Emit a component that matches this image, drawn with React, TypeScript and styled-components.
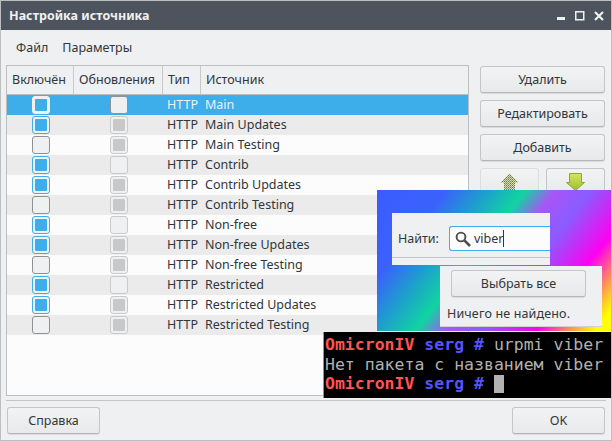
import React from "react";
import styled, { createGlobalStyle } from "styled-components";

const Global = createGlobalStyle`
  html, body { margin: 0; padding: 0; background: #eff0f1; }
  body { font-family: "Noto Sans", "Open Sans", sans-serif; font-size: 12.5px; color: #31363b; }
`;

const Win = styled.div`
  position: relative; width: 612px; height: 441px; box-sizing: border-box; overflow: hidden;
  border: 1px solid #bcbebf; display: flex; flex-direction: column; background: #eff0f1;
`;
const TitleBar = styled.div`
  height: 29px; background: #4d545e; color: #eff0f1; font-weight: 700; font-size: 12.5px; display: flex; align-items: center;
  justify-content: space-between; padding: 0 8px; flex: none;
`;
const WinBtns = styled.div`display: flex; gap: 9px; align-items: center; margin-right: -1px;`;
const MenuBar = styled.div`height: 35px; display: flex; align-items: center; gap: 14px; padding: 0 0 1px 15px; box-sizing: border-box; flex: none;`;
const Main = styled.div`display: flex; padding-left: 5px; gap: 11px; flex: none; height: 331px;`;
const Table = styled.div`
  width: 463px; height: 331px; box-sizing: border-box; border: 1px solid #bcbebf; background: #fcfcfc; display: flex; flex-direction: column;
`;
const HeadRow = styled.div`display: flex; height: 28px; background: #eff0f1; border-bottom: 1px solid #bcbebf; flex: none;`;
const HeadCell = styled.div<{ $w?: number }>`
  ${p => (p.$w ? `width:${p.$w}px;` : "flex:1;")} box-sizing: border-box; padding: 0 0 1px 5px; display: flex; align-items: center;
  border-right: ${p => (p.$w ? "1px solid #c6c8c9" : "none")};
`;
const Row = styled.div<{ $sel?: boolean; $alt?: boolean }>`
  display: flex; height: 20px; align-items: center; flex: none;
  background: ${p => (p.$sel ? "#3daee9" : p.$alt ? "#ebebeb" : "#fcfcfc")};
  color: ${p => (p.$sel ? "#eff0f1" : "#31363b")};
`;
const CheckCell = styled.div<{ $w: number }>`width: ${p => p.$w}px; display: flex; justify-content: center; align-items: center; flex: none;`;
const TextCell = styled.div<{ $w?: number }>`${p => (p.$w ? `width:${p.$w}px;flex:none;` : "flex:1;")} padding: 0 0 2px 4px; box-sizing: border-box;`;
const Check = styled.div<{ $on?: boolean; $onSel?: boolean; $off?: boolean; $fill?: boolean }>`
  width: 18px; height: 18px; box-sizing: border-box; border-radius: 3px; background: #eff0f1; padding: 2px;
  border: 1px solid ${p => (p.$onSel ? "#eff0f1" : p.$on ? "#3daee9" : p.$off ? "#c9cacb" : "#8f9192")};
  &::after { content: ""; display: block; width: 100%; height: 100%; border-radius: 1px;
    background: ${p => (p.$on ? "#3daee9" : p.$fill ? "#c8c8c8" : "transparent")}; }
`;
const Side = styled.div`width: 125px; display: flex; flex-direction: column; gap: 7px; padding-top: 1px;`;
const Btn = styled.div<{ $w?: number; $dim?: boolean }>`
  ${p => (p.$w ? `width:${p.$w}px;` : "")} height: 27px; box-sizing: border-box; display: flex; align-items: center; justify-content: center;
  border: 1px solid ${p => (p.$dim ? "#dcdddd" : "#c3c5c6")}; border-bottom-color: ${p => (p.$dim ? "#dcdddd" : "#b5b7b8")}; border-radius: 3px;
  background: linear-gradient(#f2f3f3, #e8e9ea); flex: none;
  box-shadow: ${p => (p.$dim ? "none" : "0 1px 0 #dadbdc")};
`;
const ArrowRow = styled.div`display: flex; gap: 7px;`;
const Sep = styled.div`height: 1px; background: #c3c5c6; margin: 4px 5px 0 5px; flex: none;`;
const Footer = styled.div`display: flex; justify-content: space-between; padding: 6px 6px 0 6px; flex: none;`;

const Collage = styled.div`
  position: absolute; left: 376px; top: 189px; width: 235px; height: 141px;
  background: linear-gradient(128deg, #3a5cff 0%, #3a62fb 20%, #1f9bd0 31%, #10d4a0 43%, #a855f7 52%, #8a5cff 62%, #ff00f0 78%, #ff9a50 88%, #ffff00 95%);
`;
const FindPanel = styled.div`
  position: absolute; left: 15px; top: 23px; width: 158px; height: 52px; background: #eff0f1; display: flex; flex-direction: column;
`;
const FindRow = styled.div`display: flex; align-items: center; gap: 10px; padding: 13px 0 0 6px; height: 25px; flex: none;`;
const FindInput = styled.div`
  flex: 1; height: 25px; box-sizing: border-box; background: #fcfcfc; border: 1px solid #3daee9; border-right: none; border-radius: 3px 0 0 3px;
  display: flex; align-items: center; padding-left: 5px; gap: 4px;
`;
const Caret = styled.span`border-right: 1px solid #31363b; margin-left: -1px;`;
const FindSep = styled.div`height: 1px; background: #c3c5c6; margin-top: 6px;`;
const SelectPanel = styled.div`
  position: absolute; left: 63px; top: 76px; width: 162px; height: 61px; background: #eff0f1; box-sizing: border-box; padding: 4px 0 0 11px;
  border-bottom: 1px solid #d0d1d2;
`;
const Found = styled.div`margin: 8px 0 0 -4px; letter-spacing: .15px;`;
const Term = styled.div`
  position: absolute; left: 322px; top: 331px; width: 289px; height: 66px; box-sizing: border-box; background: #000; color: #b2b2b2;
  font-family: "DejaVu Sans Mono", monospace; font-size: 16.5px; line-height: 19.5px; padding: 3px 0 0 1px; white-space: pre; border-left: 1px solid #3daee9;
`;
const Red = styled.b`color: #ff5454;`;
const Blue = styled.b`color: #5454ff;`;
const Cursor = styled.span`display: inline-block; width: 10px; height: 18px; background: #b2b2b2; vertical-align: -4px;`;

const names = ["Main", "Main Updates", "Main Testing", "Contrib", "Contrib Updates", "Contrib Testing", "Non-free", "Non-free Updates", "Non-free Testing", "Restricted", "Restricted Updates", "Restricted Testing"];

const UpArrow = () => (
  <svg width="19" height="18" viewBox="0 0 19 18">
    <defs>
      <pattern id="dither" width="2" height="2" patternUnits="userSpaceOnUse">
        <rect width="2" height="2" fill="#d5dcb0" />
        <rect width="1" height="1" fill="#6f8238" />
        <rect x="1" y="1" width="1" height="1" fill="#8ba04a" />
      </pattern>
    </defs>
    <path d="M9.5 .5 L18.5 9.5 H15 V17.5 H4 V9.5 H.5 Z" fill="url(#dither)" />
  </svg>
);
const DownArrow = () => (
  <svg width="19" height="18" viewBox="0 0 19 18">
    <defs>
      <linearGradient id="dn" x1="0" y1="0" x2="0" y2="1">
        <stop offset="0" stopColor="#d3e65a" />
        <stop offset="1" stopColor="#9dbb3a" />
      </linearGradient>
    </defs>
    <path d="M3.5 .5 H15.5 V9.5 H18.5 L9.5 17.5 L.5 9.5 H3.5 Z" fill="url(#dn)" stroke="#8ba63c" strokeWidth="1" />
  </svg>
);

export default function App() {
  return (
    <Win>
      <Global />
      <TitleBar>
        <span>Настройка источника</span>
        <WinBtns>
          <svg width="10" height="10" viewBox="0 0 10 10"><rect x="1" y="6" width="8" height="3" fill="#eff0f1" /></svg>
          <svg width="10" height="10" viewBox="0 0 10 10"><rect x=".75" y=".75" width="8" height="8" fill="none" stroke="#eff0f1" strokeWidth="1.5" /></svg>
          <svg width="10" height="10" viewBox="0 0 10 10"><path d="M1 1 L9 9 M9 1 L1 9" stroke="#eff0f1" strokeWidth="2.2" /></svg>
        </WinBtns>
      </TitleBar>
      <MenuBar><span>Файл</span><span>Параметры</span></MenuBar>
      <Main>
        <Table>
          <HeadRow>
            <HeadCell $w={67}>Включён</HeadCell>
            <HeadCell $w={89}>Обновления</HeadCell>
            <HeadCell $w={38}>Тип</HeadCell>
            <HeadCell>Источник</HeadCell>
          </HeadRow>
          {names.map((n, i) => {
            const sel = i === 0;
            const on = i % 3 !== 2;
            const upd = i % 3 === 1 || i % 3 === 2;
            return (
              <Row key={n} $sel={sel} $alt={i % 2 === 1}>
                <CheckCell $w={67}><Check $on={on} $onSel={sel} /></CheckCell>
                <CheckCell $w={89}>{sel ? <Check /> : <Check $off $fill={upd} />}</CheckCell>
                <TextCell $w={38}>HTTP</TextCell>
                <TextCell>{n}</TextCell>
              </Row>
            );
          })}
        </Table>
        <Side>
          <Btn>Удалить</Btn>
          <Btn>Редактировать</Btn>
          <Btn>Добавить</Btn>
          <ArrowRow>
            <Btn $w={59} $dim><UpArrow /></Btn>
            <Btn $w={59}><DownArrow /></Btn>
          </ArrowRow>
        </Side>
      </Main>
      <Sep />
      <Footer>
        <Btn $w={93}>Справка</Btn>
        <Btn $w={93}>OK</Btn>
      </Footer>
      <Collage>
        <FindPanel>
          <FindRow>
            <span>Найти:</span>
            <FindInput>
              <svg width="16" height="16" viewBox="0 0 16 16"><circle cx="6" cy="6" r="4.4" fill="none" stroke="#4d4d4d" strokeWidth="1.9" /><path d="M9.4 9.4 L15 15" stroke="#4d4d4d" strokeWidth="2.6" /></svg>
              <Caret>viber</Caret>
            </FindInput>
          </FindRow>
          <FindSep />
        </FindPanel>
        <SelectPanel>
          <Btn $w={135}>Выбрать все</Btn>
          <Found>Ничего не найдено.</Found>
        </SelectPanel>
      </Collage>
      <Term>
        <div><Red>OmicronIV</Red> <Blue>serg #</Blue> urpmi viber</div>
        <div>Нет пакета с названием viber</div>
        <div><Red>OmicronIV</Red> <Blue>serg #</Blue> <Cursor /></div>
      </Term>
    </Win>
  );
}
